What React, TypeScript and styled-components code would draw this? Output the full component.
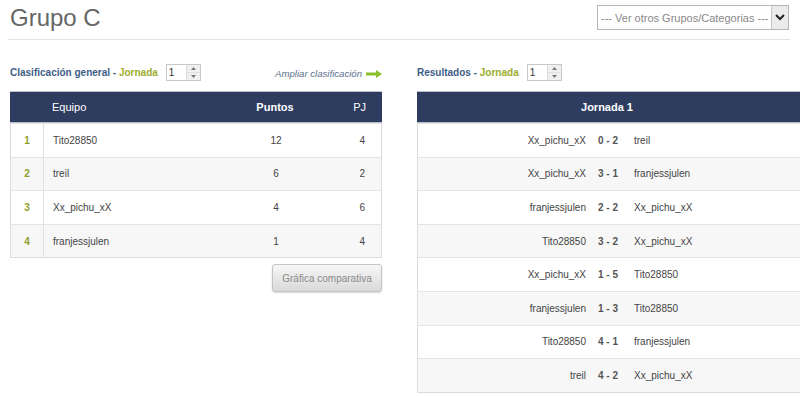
import React from "react";
import styled, { createGlobalStyle } from "styled-components";

const GlobalStyle = createGlobalStyle`
  html, body {
    margin: 0;
    padding: 0;
    background: #fff;
    overflow: hidden;
  }
  body {
    font-family: "Liberation Sans", Arial, sans-serif;
    color: #444;
  }
`;

const Page = styled.div`
  width: 800px;
  height: 396px;
  padding: 0 0 0 10px;
  box-sizing: border-box;
`;

const TopBar = styled.div`
  display: flex;
  justify-content: space-between;
  align-items: flex-start;
  padding: 4px 1px 0 2px;
  height: 40px;
  margin-left: -2px;
  border-bottom: 1px solid #e2e2e2;
  width: 782px;
  box-sizing: border-box;
`;

const Title = styled.h1`
  margin: 0;
  font-size: 24px;
  font-weight: normal;
  color: #666;
  line-height: 28px;
`;

const Select = styled.div`
  display: flex;
  align-items: stretch;
  height: 25px;
  margin-top: 1px;
  width: 192px;
  border: 1px solid #b5b5b5;
  box-sizing: border-box;
  font-size: 11px;
  color: #888;
`;

const SelectText = styled.span`
  flex: 1;
  display: flex;
  align-items: center;
  padding-left: 3px;
  white-space: nowrap;
  overflow: hidden;
`;

const SelectArrow = styled.span`
  width: 16px;
  display: flex;
  align-items: center;
  justify-content: center;
  background: #ebebeb;
  border-left: 1px solid #c5c5c5;
`;

const Columns = styled.div`
  display: flex;
  gap: 35px;
  margin-top: 22px;
`;

const Column = styled.div<{ $w: number }>`
  width: ${(p) => p.$w}px;
  flex-shrink: 0;
  display: flex;
  flex-direction: column;
`;

const HeadRow = styled.div`
  display: flex;
  align-items: center;
  height: 20px;
  margin-bottom: 9px;
`;

const Heading = styled.span`
  font-size: 10px;
  font-weight: bold;
  color: #3d5d87;
  white-space: nowrap;
`;

const Green = styled.span`
  color: #9cad2c;
`;

const Spinner = styled.span`
  display: inline-flex;
  margin-left: 8px;
  width: 35px;
  height: 17px;
  border: 1px solid #c8c8c8;
  box-sizing: border-box;
  background: #fff;
  font-size: 10px;
  color: #333;
`;

const SpinValue = styled.span`
  flex: 1;
  padding-left: 2px;
  line-height: 15px;
`;

const SpinButtons = styled.span`
  width: 13px;
  display: flex;
  flex-direction: column;
  border-left: 1px solid #ddd;
`;

const SpinButton = styled.span`
  flex: 1;
  display: flex;
  align-items: center;
  justify-content: center;
  background: #f0f0f0;
  & + & {
    border-top: 1px solid #e0e0e0;
  }
`;

const Expand = styled.a`
  margin-left: auto;
  display: flex;
  align-items: center;
  gap: 4px;
  font-size: 9.6px;
  font-style: italic;
  color: #5b6f8e;
  text-decoration: none;
  padding-top: 3px;
`;

const Table = styled.div`
  border: 1px solid #dcdcdc;
  border-top: none;
`;

const HeaderBar = styled.div<{ $center?: boolean }>`
  height: 32px;
  background: #2e3d5f;
  border-top: 1px solid #b9c1cf;
  border-bottom: 1px solid #b9c1cf;
  box-sizing: border-box;
  margin: 0 -1px;
  color: #fff;
  font-size: 11px;
  display: grid;
  grid-template-columns: ${(p) => (p.$center ? "1fr" : "33px 197px 70px 1fr")};
  align-items: center;
  padding-right: ${(p) => (p.$center ? "12px" : "0")};
  text-align: ${(p) => (p.$center ? "center" : "left")};
`;

const HeadCell = styled.span<{ $bold?: boolean; $align?: string; $pad?: number }>`
  font-weight: ${(p) => (p.$bold ? "bold" : "normal")};
  text-align: ${(p) => p.$align || "left"};
  padding-left: ${(p) => p.$pad || 0}px;
  padding-right: ${(p) => (p.$align === "right" ? 16 : 0)}px;
`;

const Row = styled.div<{ $alt: boolean; $cols: string }>`
  height: 33.6px;
  box-sizing: border-box;
  display: grid;
  grid-template-columns: ${(p) => p.$cols};
  align-items: stretch;
  background: ${(p) => (p.$alt ? "#f7f7f7" : "#fff")};
  border-top: 1px solid #e4e4e4;
  font-size: 10px;
  color: #444;
  &:first-of-type {
    border-top: none;
  }
`;

const Rank = styled.span`
  display: flex;
  align-items: center;
  justify-content: center;
  border-right: 1px solid #e0e0e0;
  color: #8f9d2b;
  font-weight: bold;
`;

const Cell = styled.span<{ $align?: string; $pad?: number; $padRight?: number }>`
  display: flex;
  align-items: center;
  justify-content: ${(p) => p.$align || "flex-start"};
  padding-left: ${(p) => p.$pad || 0}px;
  padding-right: ${(p) => p.$padRight || 0}px;
`;

const Score = styled.span`
  display: flex;
  align-items: center;
  justify-content: center;
  font-weight: bold;
  color: #555;
  white-space: pre;
`;

const ButtonRow = styled.div`
  display: flex;
  justify-content: flex-end;
  margin-top: 6px;
`;

const Button = styled.button`
  width: 110px;
  height: 28px;
  border: 1px solid #c4c4c4;
  border-radius: 3px;
  background: linear-gradient(#f7f7f7, #d9d9d9);
  box-shadow: 0 1px 2px rgba(0, 0, 0, 0.15);
  font-family: "Liberation Sans", Arial, sans-serif;
  font-size: 10px;
  color: #8a8a8a;
  padding: 0;
`;

const standings = [
  { team: "Tito28850", pts: 12, pj: 4 },
  { team: "treil", pts: 6, pj: 2 },
  { team: "Xx_pichu_xX", pts: 4, pj: 6 },
  { team: "franjessjulen", pts: 1, pj: 4 },
];

const results = [
  ["Xx_pichu_xX", "0 - 2", "treil"],
  ["Xx_pichu_xX", "3 - 1", "franjessjulen"],
  ["franjessjulen", "2 - 2", "Xx_pichu_xX"],
  ["Tito28850", "3 - 2", "Xx_pichu_xX"],
  ["Xx_pichu_xX", "1 - 5", "Tito28850"],
  ["franjessjulen", "1 - 3", "Tito28850"],
  ["Tito28850", "4 - 1", "franjessjulen"],
  ["treil", "4 - 2", "Xx_pichu_xX"],
];

const NumberSpinner = ({ value }: { value: number }) => (
  <Spinner>
    <SpinValue>{value}</SpinValue>
    <SpinButtons>
      <SpinButton>
        <svg width="5" height="3" viewBox="0 0 5 3">
          <path d="M0 3 L2.5 0 L5 3 Z" fill="#777" />
        </svg>
      </SpinButton>
      <SpinButton>
        <svg width="5" height="3" viewBox="0 0 5 3">
          <path d="M0 0 L2.5 3 L5 0 Z" fill="#777" />
        </svg>
      </SpinButton>
    </SpinButtons>
  </Spinner>
);

const GreenArrow = () => (
  <svg width="16" height="8" viewBox="0 0 16 8">
    <path d="M0 2.5 H10 V0 L16 4 L10 8 V5.5 H0 Z" fill="#8cbf2c" />
  </svg>
);

const STANDING_COLS = "33px 197px 70px 1fr";
const RESULT_COLS = "168px 44px 1fr";

export default function App() {
  return (
    <Page>
      <GlobalStyle />
      <TopBar>
        <Title>Grupo C</Title>
        <Select>
          <SelectText>--- Ver otros Grupos/Categorias ---</SelectText>
          <SelectArrow>
            <svg width="10" height="7" viewBox="0 0 10 7">
              <path d="M1 1 L5 5 L9 1" stroke="#222" strokeWidth="2" fill="none" />
            </svg>
          </SelectArrow>
        </Select>
      </TopBar>

      <Columns>
        <Column $w={372}>
          <HeadRow>
            <Heading>
              Clasificación general - <Green>Jornada</Green>
            </Heading>
            <NumberSpinner value={1} />
            <Expand href="#">
              Ampliar clasificación <GreenArrow />
            </Expand>
          </HeadRow>
          <Table>
            <HeaderBar>
              <span />
              <HeadCell $pad={9}>Equipo</HeadCell>
              <HeadCell $bold $align="center">
                Puntos
              </HeadCell>
              <HeadCell $align="right">PJ</HeadCell>
            </HeaderBar>
            {standings.map((s, i) => (
              <Row key={s.team} $alt={i % 2 === 1} $cols={STANDING_COLS}>
                <Rank>{i + 1}</Rank>
                <Cell $pad={9}>{s.team}</Cell>
                <Cell $align="center">{s.pts}</Cell>
                <Cell $align="flex-end" $padRight={16}>
                  {s.pj}
                </Cell>
              </Row>
            ))}
          </Table>
          <ButtonRow>
            <Button>Gráfica comparativa</Button>
          </ButtonRow>
        </Column>

        <Column $w={392}>
          <HeadRow>
            <Heading>
              Resultados - <Green>Jornada</Green>
            </Heading>
            <NumberSpinner value={1} />
          </HeadRow>
          <Table>
            <HeaderBar $center>
              <HeadCell $bold $align="center">
                Jornada 1
              </HeadCell>
            </HeaderBar>
            {results.map(([home, score, away], i) => (
              <Row key={i} $alt={i % 2 === 1} $cols={RESULT_COLS}>
                <Cell $align="flex-end">{home}</Cell>
                <Score>{score}</Score>
                <Cell $pad={4}>{away}</Cell>
              </Row>
            ))}
          </Table>
        </Column>
      </Columns>
    </Page>
  );
}
